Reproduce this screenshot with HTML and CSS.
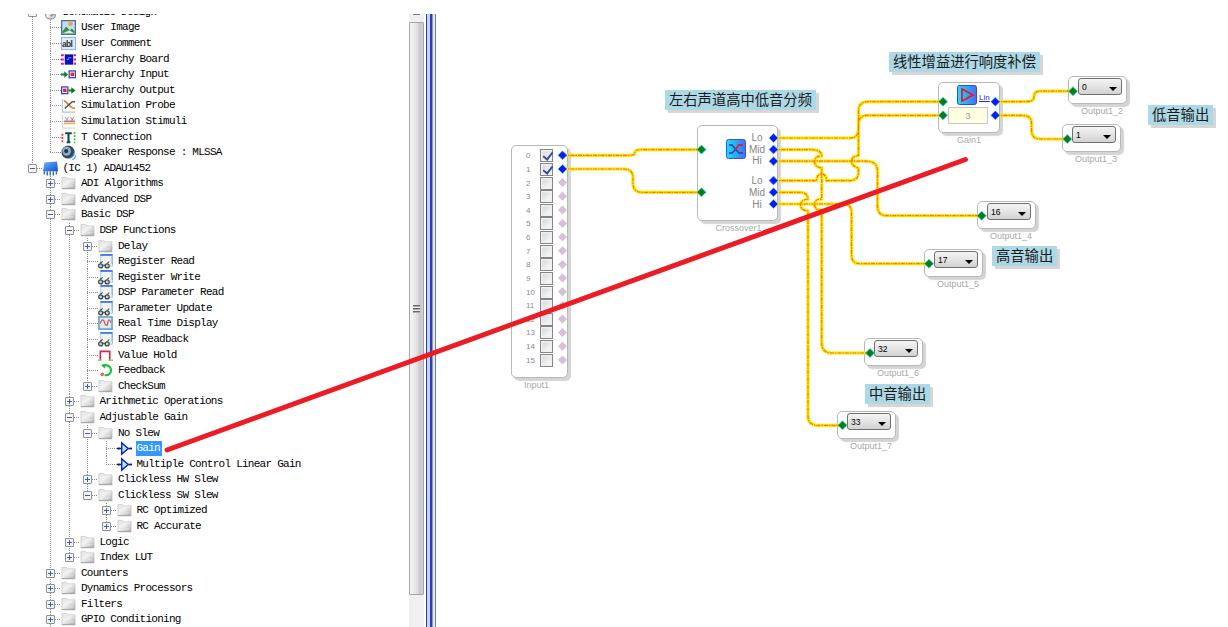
FILE: index.html
```
<!DOCTYPE html>
<html lang="zh">
<head>
  <meta charset="UTF-8" />
  <title>Schematic Design</title>
  <link rel="stylesheet" href="styles.css">
</head>
<body>
  <!-- Icon symbols -->
  <svg class="defs" width="0" height="0">
    <defs>
      <linearGradient id="gGrey" x1="0" y1="0" x2="1" y2="1"><stop offset="0" stop-color="#e2e2e2"/><stop offset=".45" stop-color="#f2f2f2"/><stop offset="1" stop-color="#a9a9a9"/></linearGradient>
      <linearGradient id="gBlue" x1="0" y1="0" x2="1" y2="0"><stop offset="0" stop-color="#19e0ff"/><stop offset="1" stop-color="#4a6cf0"/></linearGradient>
      <linearGradient id="gChip" x1="0" y1="0" x2="1" y2="1"><stop offset="0" stop-color="#6db4ff"/><stop offset="1" stop-color="#0f4fd0"/></linearGradient>
    </defs>
    <symbol id="folder" viewBox="0 0 16 16"><path d="M1 1.500h5l1 1.500h8V13.500H1z" fill="url(#gGrey)" stroke="#c2c2c2" stroke-width=".7"/><path d="M1 13.500h14" stroke="#a0a0a0"/><path d="M4 10.500h9" stroke="#e6e6e6"/></symbol>
    <symbol id="db" viewBox="0 0 16 16"><path d="M3 3v9c0 4 10 4 10 0V3z" fill="#ddd" stroke="#777"/><path d="M5 6v7" stroke="#fff" stroke-width="2"/><path d="M8 12l4-3" stroke="#999" stroke-width="2"/></symbol>
    <symbol id="image" viewBox="0 0 16 16"><rect x=".7" y=".7" width="14.600" height="14.600" fill="#c3e0fa" stroke="#4b67a5" stroke-width="1.300"/><circle cx="10" cy="4" r="2.600" fill="#f0a152"/><path d="M1.500 12l4-5 4 4 2-2 3 3v2.500h-13z" fill="#3c8d4c"/><path d="M2 14l7-3 5 3z" fill="#d8eed0"/></symbol>
    <symbol id="abl" viewBox="0 0 16 16"><rect x=".5" y="1.500" width="15" height="13" fill="#dcebfa" stroke="#7db0e0"/><text x="1" y="11.500" class="abl">abl</text></symbol>
    <symbol id="board" viewBox="0 0 16 16"><rect x="4" y="2.500" width="9" height="11" fill="#0a10b8"/><path d="M6 8h2v-2h3" stroke="#5a8dff" fill="none"/><path d="M0 3.500h3M0 8h3M0 12.500h3M13.500 3.500h2.500M13.500 8h2.500M13.500 12.500h2.500" stroke="#c018c8" stroke-width="2"/></symbol>
    <symbol id="hin" viewBox="0 0 16 16"><path d="M0 8h4" stroke="#0a9a20" stroke-width="2.400"/><path d="M3.500 4.500l4 3.500-4 3.500z" fill="#087818"/><rect x="8.700" y="4.200" width="6.600" height="7.200" fill="#fff" stroke="#2738c8" stroke-width="1.300"/><rect x="10.200" y="6" width="3.700" height="3.700" fill="#f02020"/></symbol>
    <symbol id="hout" viewBox="0 0 16 16"><rect x=".7" y="4.200" width="6.600" height="7.200" fill="#fff" stroke="#2738c8" stroke-width="1.300"/><rect x="2.200" y="6" width="3.700" height="3.700" fill="#f02020"/><path d="M8 8h4" stroke="#0a9a20" stroke-width="2.400"/><path d="M11 4.500l4.500 3.500-4.500 3.500z" fill="#087818"/></symbol>
    <symbol id="probe" viewBox="0 0 16 16"><path d="M1.500 1v14H15" stroke="#a6cbd3" fill="none" stroke-width="1.200"/><path d="M3 3c4 0 5 8 12 8" stroke="#d8852e" stroke-width="2" fill="none"/><path d="M4 11l8-7h3" stroke="#5b5365" stroke-width="1.600" fill="none"/></symbol>
    <symbol id="stimuli" viewBox="0 0 16 16"><path d="M1.500 1v14H15" stroke="#c3cdd2" fill="none"/><path d="M3 10h12" stroke="#f5b83c" stroke-width="2"/><path d="M3 7.700h12" stroke="#8976d0" stroke-width="1.500"/><path d="M4 3l3 4M8 3l-2 4" stroke="#9a8be0"/><path d="M10 3l3 4M14 3l-3 4" stroke="#ef6036"/></symbol>
    <symbol id="tconn" viewBox="0 0 16 16"><path d="M4.500 3.500h7M8 3v10M6 13h4" stroke="#12484c" stroke-width="2.200" fill="none"/><path d="M1.500 4v10" stroke="#f03030" stroke-width="1.800" stroke-dasharray="2 1.500"/><path d="M14.500 2v12" stroke="#28c828" stroke-width="1.800" stroke-dasharray="2 1.500"/></symbol>
    <symbol id="speaker" viewBox="0 0 16 16"><ellipse cx="7.500" cy="7.500" rx="7" ry="7" fill="#33475f"/><ellipse cx="6" cy="6.500" rx="4.600" ry="5" fill="#8eacc9"/><circle cx="5.500" cy="6.500" r="2.300" fill="#26384e"/><path d="M10 13.500q4-1 4-5M12 15.500q3.500-1 3.500-4.500" stroke="#4b9cf0" stroke-width="1.200" fill="none"/></symbol>
    <symbol id="chip" viewBox="0 0 16 16"><path d="M1.500 1.500L15 .5 16 11H0z" fill="url(#gChip)"/><path d="M1.500 11v3.500M4.500 11v4.500M7.700 11v4.500M11 11v4.500M14.300 11v3.500" stroke="#3465b4" stroke-width="1.500"/></symbol>
    <symbol id="reg" viewBox="0 0 16 16"><rect x="3" y="0" width="12.500" height="13" fill="#eef5ea" stroke="#a8c8f0"/><path d="M2.500 1h13" stroke="#4378ea" stroke-width="2"/><path d="M15 2v9" stroke="#7fb0f5" stroke-width="1.200"/><circle cx="2.800" cy="12.700" r="2.100" fill="#ccd6d6" stroke="#3c4448" stroke-width="1.300"/><circle cx="9.800" cy="12.700" r="2.100" fill="#ccd6d6" stroke="#3c4448" stroke-width="1.300"/><path d="M5 12h3M2 10l3-2M10 10l2-2" stroke="#3c4448" stroke-width="1.100"/></symbol>
    <symbol id="rtd" viewBox="0 0 16 16"><rect x="1" y="1" width="14" height="13" fill="#dcecf5" stroke="#5594bb" stroke-width="1.500"/><path d="M2.500 8c1.500-5 3.500-5 4.500-1s3 4 3.500 0 2-4 3 0" stroke="#e04848" stroke-width="1.300" fill="none"/></symbol>
    <symbol id="hold" viewBox="0 0 16 16"><path d="M2.500 13V3.500h10V13" stroke="#d42a50" stroke-width="1.800" fill="none"/><path d="M0 13h3.500M11.500 13H16" stroke="#88d838" stroke-width="1.500"/></symbol>
    <symbol id="feedback" viewBox="0 0 16 16"><path d="M5 2.500C16 0 17 14 7 13" stroke="#1cbf3a" stroke-width="2.300" fill="none"/><path d="M8 .5L3.500 2.700 7.500 6" fill="#1cbf3a"/><circle cx="4.500" cy="12" r="2" fill="#f06868"/></symbol>
    <symbol id="gain" viewBox="0 0 16 16"><path d="M0 8h5M12 8h4" stroke="#111b80" stroke-width="1.500"/><path d="M5 2v12L12 8z" fill="#a8efff" stroke="#1020c8" stroke-width="1.500"/><circle cx="2" cy="8" r="1.200" fill="#111b80"/><circle cx="15" cy="8" r="1" fill="#111b80"/></symbol>
  </svg>

  <div class="app">
    <!-- Toolbox tree -->
    <div class="toolbox">
      <ul class="tree">
        <li>
          <div class="row"><i class="box"></i><i class="stub"></i><svg><use href="#db"/></svg><span>Schematic Design</span></div>
          <ul>
            <li><div class="row leaf"><i class="stub"></i><svg><use href="#image"/></svg><span>User Image</span></div></li>
            <li><div class="row leaf"><i class="stub"></i><svg><use href="#abl"/></svg><span>User Comment</span></div></li>
            <li><div class="row leaf"><i class="stub"></i><svg><use href="#board"/></svg><span>Hierarchy Board</span></div></li>
            <li><div class="row leaf"><i class="stub"></i><svg><use href="#hin"/></svg><span>Hierarchy Input</span></div></li>
            <li><div class="row leaf"><i class="stub"></i><svg><use href="#hout"/></svg><span>Hierarchy Output</span></div></li>
            <li><div class="row leaf"><i class="stub"></i><svg><use href="#probe"/></svg><span>Simulation Probe</span></div></li>
            <li><div class="row leaf"><i class="stub"></i><svg><use href="#stimuli"/></svg><span>Simulation Stimuli</span></div></li>
            <li><div class="row leaf"><i class="stub"></i><svg><use href="#tconn"/></svg><span>T Connection</span></div></li>
            <li><div class="row leaf"><i class="stub"></i><svg><use href="#speaker"/></svg><span>Speaker Response : MLSSA</span></div></li>
          </ul>
        </li>
        <li>
          <div class="row root"><i class="box"></i><i class="stub"></i><svg><use href="#chip"/></svg><span>(IC 1) ADAU1452</span></div>
          <ul>
            <li><div class="row"><i class="box plus"></i><i class="stub"></i><svg><use href="#folder"/></svg><span>ADI Algorithms</span></div></li>
            <li><div class="row"><i class="box plus"></i><i class="stub"></i><svg><use href="#folder"/></svg><span>Advanced DSP</span></div></li>
            <li>
              <div class="row"><i class="box"></i><i class="stub"></i><svg><use href="#folder"/></svg><span>Basic DSP</span></div>
              <ul>
                <li>
                  <div class="row"><i class="box"></i><i class="stub"></i><svg><use href="#folder"/></svg><span>DSP Functions</span></div>
                  <ul>
                    <li><div class="row"><i class="box plus"></i><i class="stub"></i><svg><use href="#folder"/></svg><span>Delay</span></div></li>
                    <li><div class="row leaf"><i class="stub"></i><svg><use href="#reg"/></svg><span>Register Read</span></div></li>
                    <li><div class="row leaf"><i class="stub"></i><svg><use href="#reg"/></svg><span>Register Write</span></div></li>
                    <li><div class="row leaf"><i class="stub"></i><svg><use href="#reg"/></svg><span>DSP Parameter Read</span></div></li>
                    <li><div class="row leaf"><i class="stub"></i><svg><use href="#reg"/></svg><span>Parameter Update</span></div></li>
                    <li><div class="row leaf"><i class="stub"></i><svg><use href="#rtd"/></svg><span>Real Time Display</span></div></li>
                    <li><div class="row leaf"><i class="stub"></i><svg><use href="#reg"/></svg><span>DSP Readback</span></div></li>
                    <li><div class="row leaf"><i class="stub"></i><svg><use href="#hold"/></svg><span>Value Hold</span></div></li>
                    <li><div class="row leaf"><i class="stub"></i><svg><use href="#feedback"/></svg><span>Feedback</span></div></li>
                    <li><div class="row"><i class="box plus"></i><i class="stub"></i><svg><use href="#folder"/></svg><span>CheckSum</span></div></li>
                  </ul>
                </li>
                <li><div class="row"><i class="box plus"></i><i class="stub"></i><svg><use href="#folder"/></svg><span>Arithmetic Operations</span></div></li>
                <li>
                  <div class="row"><i class="box"></i><i class="stub"></i><svg><use href="#folder"/></svg><span>Adjustable Gain</span></div>
                  <ul>
                    <li>
                      <div class="row"><i class="box"></i><i class="stub"></i><svg><use href="#folder"/></svg><span>No Slew</span></div>
                      <ul>
                        <li><div class="row leaf"><i class="stub"></i><svg><use href="#gain"/></svg><span class="selected">Gain</span></div></li>
                        <li><div class="row leaf"><i class="stub"></i><svg><use href="#gain"/></svg><span>Multiple Control Linear Gain</span></div></li>
                      </ul>
                    </li>
                    <li><div class="row"><i class="box plus"></i><i class="stub"></i><svg><use href="#folder"/></svg><span>Clickless HW Slew</span></div></li>
                    <li>
                      <div class="row"><i class="box"></i><i class="stub"></i><svg><use href="#folder"/></svg><span>Clickless SW Slew</span></div>
                      <ul>
                        <li><div class="row"><i class="box plus"></i><i class="stub"></i><svg><use href="#folder"/></svg><span>RC Optimized</span></div></li>
                        <li><div class="row"><i class="box plus"></i><i class="stub"></i><svg><use href="#folder"/></svg><span>RC Accurate</span></div></li>
                      </ul>
                    </li>
                  </ul>
                </li>
                <li><div class="row"><i class="box plus"></i><i class="stub"></i><svg><use href="#folder"/></svg><span>Logic</span></div></li>
                <li><div class="row"><i class="box plus"></i><i class="stub"></i><svg><use href="#folder"/></svg><span>Index LUT</span></div></li>
              </ul>
            </li>
            <li><div class="row"><i class="box plus"></i><i class="stub"></i><svg><use href="#folder"/></svg><span>Counters</span></div></li>
            <li><div class="row"><i class="box plus"></i><i class="stub"></i><svg><use href="#folder"/></svg><span>Dynamics Processors</span></div></li>
            <li><div class="row"><i class="box plus"></i><i class="stub"></i><svg><use href="#folder"/></svg><span>Filters</span></div></li>
            <li class="more"><div class="row"><i class="box plus"></i><i class="stub"></i><svg><use href="#folder"/></svg><span>GPIO Conditioning</span></div></li>
          </ul>
        </li>
      </ul>
    </div>

    <div class="scrollbar"><i class="up"></i><div class="thumb"><i class="grip"></i></div></div>
    <div class="splitter"></div>

    <!-- Schematic canvas -->
    <div class="canvas">
      <div class="note note-gain">线性增益进行响度补偿</div>
      <div class="note note-cross">左右声道高中低音分频</div>
      <div class="note note-low">低音输出</div>
      <div class="note note-high">高音输出</div>
      <div class="note note-mid">中音输出</div>

      <div class="node input">
        <div class="block">
          <div class="ch">0<i class="check on"></i></div>
          <div class="ch">1<i class="check on"></i></div>
          <div class="ch">2<i class="check"></i></div>
          <div class="ch">3<i class="check"></i></div>
          <div class="ch">4<i class="check"></i></div>
          <div class="ch">5<i class="check"></i></div>
          <div class="ch">6<i class="check"></i></div>
          <div class="ch">7<i class="check"></i></div>
          <div class="ch">8<i class="check"></i></div>
          <div class="ch">9<i class="check"></i></div>
          <div class="ch">10<i class="check"></i></div>
          <div class="ch">11<i class="check"></i></div>
          <div class="ch">12<i class="check"></i></div>
          <div class="ch">13<i class="check"></i></div>
          <div class="ch">14<i class="check"></i></div>
          <div class="ch">15<i class="check"></i></div>
        </div>
        <div class="name">Input1</div>
      </div>

      <div class="node crossover">
        <div class="block">
          <svg class="tile" viewBox="0 0 20 20"><rect x=".5" y=".5" width="19" height="19" rx="2" fill="url(#gBlue)" stroke="#3a55d8"/><path d="M3 6h3l7 8h4" stroke="#26459a" stroke-width="1.500" fill="none"/><path d="M3 14h3l4-4" stroke="#26459a" stroke-width="1.500" fill="none"/><path d="M9 11l4-5h4" stroke="#d0283c" stroke-width="1.800" fill="none"/></svg>
          <div class="bands">
            <div>Lo</div><div>Mid</div><div>Hi</div>
            <div class="second">Lo</div><div>Mid</div><div>Hi</div>
          </div>
        </div>
        <div class="name">Crossover1</div>
      </div>

      <div class="node gain">
        <div class="block">
          <div class="head">
            <svg class="tile" viewBox="0 0 20 20"><rect x=".5" y=".5" width="19" height="19" rx="2" fill="url(#gBlue)" stroke="#2f4bd0"/><path d="M5 4v12l11-6z" stroke="#e8182c" stroke-width="1.800" fill="none"/></svg>
            <span class="lin">Lin</span>
          </div>
          <div class="field">3</div>
        </div>
        <div class="name">Gain1</div>
      </div>

      <div class="node output out2"><div class="block"><div class="combo">0</div></div><div class="name">Output1_2</div></div>
      <div class="node output out3"><div class="block"><div class="combo">1</div></div><div class="name">Output1_3</div></div>
      <div class="node output out4"><div class="block"><div class="combo">16</div></div><div class="name">Output1_4</div></div>
      <div class="node output out5"><div class="block"><div class="combo">17</div></div><div class="name">Output1_5</div></div>
      <div class="node output out6"><div class="block"><div class="combo">32</div></div><div class="name">Output1_6</div></div>
      <div class="node output out7"><div class="block"><div class="combo">33</div></div><div class="name">Output1_7</div></div>
    </div>
  </div>

  <!-- Wires, pins and the pointer line -->
  <svg class="wires" viewBox="0 0 1228 627">
    <defs>
      <path id="pin" d="M0-4.500L4.500 0 0 4.500-4.500 0z"/>
      <g id="net" fill="none">
        <path d="M563 155.300H629Q635 155.300 635 152.500T641 149.700H701"/>
        <path d="M563 169H624Q633 169 633 178V183Q633 192.300 642 192.300H701"/>
        <path d="M774 138H850Q858.500 138 858.500 129V111Q858.500 101.700 868 101.700H943"/>
        <path d="M774 149.600H811Q821.700 149.600 821.700 156Q814.500 156 814.500 161.500T821.700 168V199Q814.500 199 814.500 204.500T821.700 210V343Q821.700 353 832 353H870"/>
        <path d="M774 161.200H866Q877.500 161.200 877.500 171V206Q877.500 215.700 887 215.700H982"/>
        <path d="M774 180.600H816.500Q817 174 821.700 174T826.500 180.600H850Q858.500 180.600 858.500 172V168Q851.500 166 851.500 161.200T858.500 155.500V124Q858.500 115.300 868 115.300H943"/>
        <path d="M774 192.300H799Q808 192.300 808 199Q800.500 200 800.500 205T808 211V416Q808 425.300 818 425.300H842"/>
        <path d="M774 204H843Q851.500 204 851.500 212V255Q851.500 263.700 860 263.700H929"/>
        <path d="M996 101.700H1026Q1034 101.700 1034 97Q1034 91.200 1040 91.200H1073"/>
        <path d="M996 115.300H1022Q1031.500 115.300 1031.500 123V130Q1031.500 139 1040 139H1067"/>
      </g>
    </defs>
    <use href="#net" class="wire"/>
    <use href="#net" class="signal"/>
    <g class="pins-out">
      <use href="#pin" x="562.500" y="155.300"/><use href="#pin" x="562.500" y="169"/>
      <use href="#pin" x="773.500" y="138"/><use href="#pin" x="773.500" y="149.600"/><use href="#pin" x="773.500" y="161.200"/>
      <use href="#pin" x="773.500" y="180.600"/><use href="#pin" x="773.500" y="192.300"/><use href="#pin" x="773.500" y="204"/>
      <use href="#pin" x="995.300" y="101.700"/><use href="#pin" x="995.300" y="115.300"/>
    </g>
    <g class="pins-in">
      <use href="#pin" x="701.500" y="149.600"/><use href="#pin" x="701.500" y="192.300"/>
      <use href="#pin" x="943" y="101.700"/><use href="#pin" x="943" y="115.300"/>
      <use href="#pin" x="1073" y="91.200"/><use href="#pin" x="1067.300" y="139"/>
      <use href="#pin" x="981.700" y="215.700"/><use href="#pin" x="929" y="263.700"/>
      <use href="#pin" x="870" y="353"/><use href="#pin" x="842.500" y="425.300"/>
    </g>
    <g class="pins-off">
      <use href="#pin" x="562.500" y="182.600"/><use href="#pin" x="562.500" y="196.200"/><use href="#pin" x="562.500" y="209.900"/>
      <use href="#pin" x="562.500" y="223.500"/><use href="#pin" x="562.500" y="237.100"/><use href="#pin" x="562.500" y="250.800"/>
      <use href="#pin" x="562.500" y="264.400"/><use href="#pin" x="562.500" y="278"/><use href="#pin" x="562.500" y="291.700"/>
      <use href="#pin" x="562.500" y="305.300"/><use href="#pin" x="562.500" y="319"/><use href="#pin" x="562.500" y="332.600"/>
      <use href="#pin" x="562.500" y="346.200"/><use href="#pin" x="562.500" y="359.900"/>
    </g>
    <path class="pointer" d="M167 450L965.500 159.500"/>
  </svg>
</body>
</html>
```

FILE: styles.css
```
* {
  box-sizing: border-box;
}
body {
  margin: 0;
  height: 627px;
  overflow: hidden;
  position: relative;
  background: #fff;
  font-family: 'Liberation Sans', Arial, sans-serif;
  color: #000;
}
.defs {
  position: absolute;
}
.abl {
  font: bold 9px 'Liberation Sans', sans-serif;
  fill: #333;
}
.app {
  display: flex;
  height: 627px;
}

/* Toolbox tree */
.toolbox {
  width: 409px;
  margin-top: 14px;
  overflow: hidden;
}
.tree, .tree ul {
  list-style: none;
  margin: 0;
  padding: 0 0 0 18.5px;
}
.tree {
  margin-top: -9.4px;
  padding-left: 27.5px;
}
.tree li {
  background: repeating-linear-gradient(#8a8a8a 0 1px, #fff 1px 2px) 4px 0 / 1px 100% no-repeat;
}
.tree li:last-child {
  background-size: 1px 8px;
}
.tree li.more {
  background-size: 1px 100%;
}
.row {
  display: flex;
  align-items: center;
  height: 15.58px;
  font-family: 'Liberation Mono', monospace;
  font-size: 11px;
  letter-spacing: -0.74px;
  line-height: 15px;
  white-space: pre;
}
.row svg {
  width: 15px;
  height: 15px;
  margin-right: 5px;
  flex: none;
}
.row.root svg {
  width: 17px;
  margin: 0 4px 0 -1px;
}
.box {
  width: 9px;
  height: 9px;
  flex: none;
  border: 1px solid #919191;
  border-radius: 1px;
  background: linear-gradient(#3c5fae, #3c5fae) center / 5px 1px no-repeat, #f4f4f4;
}
.box.plus {
  background: linear-gradient(#3c5fae, #3c5fae) center / 5px 1px no-repeat, linear-gradient(#3c5fae, #3c5fae) center / 1px 5px no-repeat, #f4f4f4;
}
.stub {
  width: 6px;
  height: 1px;
  flex: none;
  background: repeating-linear-gradient(90deg, #8a8a8a 0 1px, #fff 1px 2px);
}
.leaf .stub {
  width: 11px;
  margin-left: 4px;
}
.selected {
  background: #3399ff;
  color: #fff;
  padding: 0 2px 0 1px;
  margin-left: -1px;
}

/* Scrollbar and splitter */
.scrollbar {
  width: 15px;
  margin-top: 14px;
  background: #f0f0f0;
}
.up {
  display: block;
  width: 7px;
  height: 1px;
  margin: 0 0 7px 4px;
  background: #777;
}
.thumb {
  height: 573px;
  display: flex;
  justify-content: center;
  padding-top: 282px;
  border: 1px solid #a6a6a6;
  border-radius: 1px;
  background: linear-gradient(90deg, #f5f5f5, #e6e6e8 45%, #c6c7cc 80%, #d5d5d8);
}
.grip {
  width: 7px;
  height: 8px;
  background: repeating-linear-gradient(#666 0 1px, #aaa 1px 2px, #eee 2px 3px);
}
.splitter {
  width: 13px;
  margin-top: 14px;
  background: linear-gradient(90deg, #fff 0 2px, #34389e 2px 3px, #bcd8fc 3px 6px, #3438b8 6px 8px, #999 8px 9px, #ece9d8 9px 11px, #4a86bc 11px 12px, #fff 12px);
}

/* Schematic canvas */
.canvas {
  flex: 1;
  position: relative;
}
.note {
  position: absolute;
  height: 20px;
  padding: 0 4px;
  background: #add8e6;
  box-shadow: 3px 3px 0 #d6d6d6;
  font: 14.3px/17px 'Noto Sans CJK SC', sans-serif;
  color: #1a1a1a;
  white-space: nowrap;
}
.note-gain { left: 452px; top: 52px; }
.note-cross { left: 228px; top: 90px; }
.note-low { left: 711px; top: 105px; }
.note-high { left: 555px; top: 246px; }
.note-mid { left: 428px; top: 384px; }

.node {
  position: absolute;
}
.block {
  background: #fff;
  border: 1px solid #b8b8b8;
  border-radius: 5px;
  box-shadow: 3px 3px 1px #d4d4d4;
}
.name {
  margin-top: 2px;
  font-size: 9px;
  line-height: 11px;
  color: #a8a8a8;
  text-align: center;
}

.input { left: 74px; top: 145px; width: 57px; }
.input .block {
  height: 233px;
  padding: 3px 0 0 14px;
}
.input .name {
  text-align: left;
  padding-left: 13px;
}
.ch {
  display: flex;
  align-items: center;
  justify-content: space-between;
  width: 27px;
  height: 13.64px;
  font-size: 8px;
  color: #8c8c8c;
}
.check {
  width: 13px;
  height: 13px;
  border: 1px solid #858585;
  background: linear-gradient(135deg, #cfd3d8, #fff);
  box-shadow: inset 0 0 0 1.5px #f0f0f0;
}
.check.on::after {
  content: '';
  display: block;
  width: 4px;
  height: 8px;
  margin: 0 0 0 4px;
  border: solid #3a4f9a;
  border-width: 0 2px 2px 0;
  transform: rotate(38deg);
}

.crossover { left: 260px; top: 125px; width: 81px; }
.crossover .block {
  display: flex;
  height: 96px;
  padding: 6px 0 0 28px;
}
.crossover .name {
  margin-left: 2px;
}
.tile {
  width: 20px;
  height: 20px;
  flex: none;
}
.crossover .tile {
  margin-top: 7px;
}
.bands {
  flex: 1;
  margin: 0 7px 0 -2px;
  font-size: 10px;
  line-height: 11.7px;
  color: #858585;
  text-align: center;
}
.second {
  margin-top: 8px;
}

.gain { left: 501px; top: 82px; width: 62px; }
.gain .block {
  height: 51px;
  padding: 2px 0 0 9px;
}
.head {
  display: flex;
  align-items: center;
  padding-left: 9px;
  height: 20px;
}
.lin {
  margin: 5px 0 0 2px;
  font-size: 8px;
  line-height: 9px;
  color: #2828d8;
  text-decoration: underline;
}
.field {
  width: 40px;
  height: 17px;
  margin-top: 2px;
  border: 1px solid #c6c6c6;
  background: #ffffe1;
  font-size: 9px;
  line-height: 16px;
  text-align: center;
  color: #999;
}

.output {
  width: 59px;
}
.output .block {
  height: 28px;
  padding: 1px 0 0 9px;
}
.output .name {
  margin-left: 9px;
}
.combo {
  display: flex;
  align-items: center;
  justify-content: space-between;
  width: 44px;
  height: 17px;
  padding: 0 4px 0 3px;
  border: 1px solid #707070;
  border-radius: 3px;
  background: linear-gradient(#f4f4f4, #e4e4e4 50%, #d2d2d2);
  font-size: 8.5px;
  color: #000;
}
.combo::after {
  content: '';
  margin-top: 4px;
  border: 4px solid transparent;
  border-top-color: #000;
  border-bottom: 0;
}
.out2 { left: 631px; top: 76px; }
.out3 { left: 625px; top: 124px; }
.out4 { left: 540px; top: 201px; }
.out5 { left: 487px; top: 249px; }
.out6 { left: 427px; top: 338px; }
.out7 { left: 400px; top: 411px; }

/* Wires */
.wires {
  position: absolute;
  left: 0;
  top: 0;
  width: 1228px;
  height: 627px;
}
.wire {
  stroke: #ffe800;
  stroke-width: 3.2px;
}
.signal {
  stroke: #f7780a;
  stroke-width: 1.2px;
  stroke-dasharray: 4 1 1.5 1;
}
.pins-out {
  fill: #0a1cf5;
  stroke: #58c8ff;
  stroke-width: 0.6px;
}
.pins-in {
  fill: #067c22;
  stroke: #30d8b0;
  stroke-width: 0.8px;
}
.pins-off {
  fill: #d8bfd8;
}
.pointer {
  stroke: #ed1c24;
  stroke-width: 5px;
  stroke-linecap: round;
}
```
